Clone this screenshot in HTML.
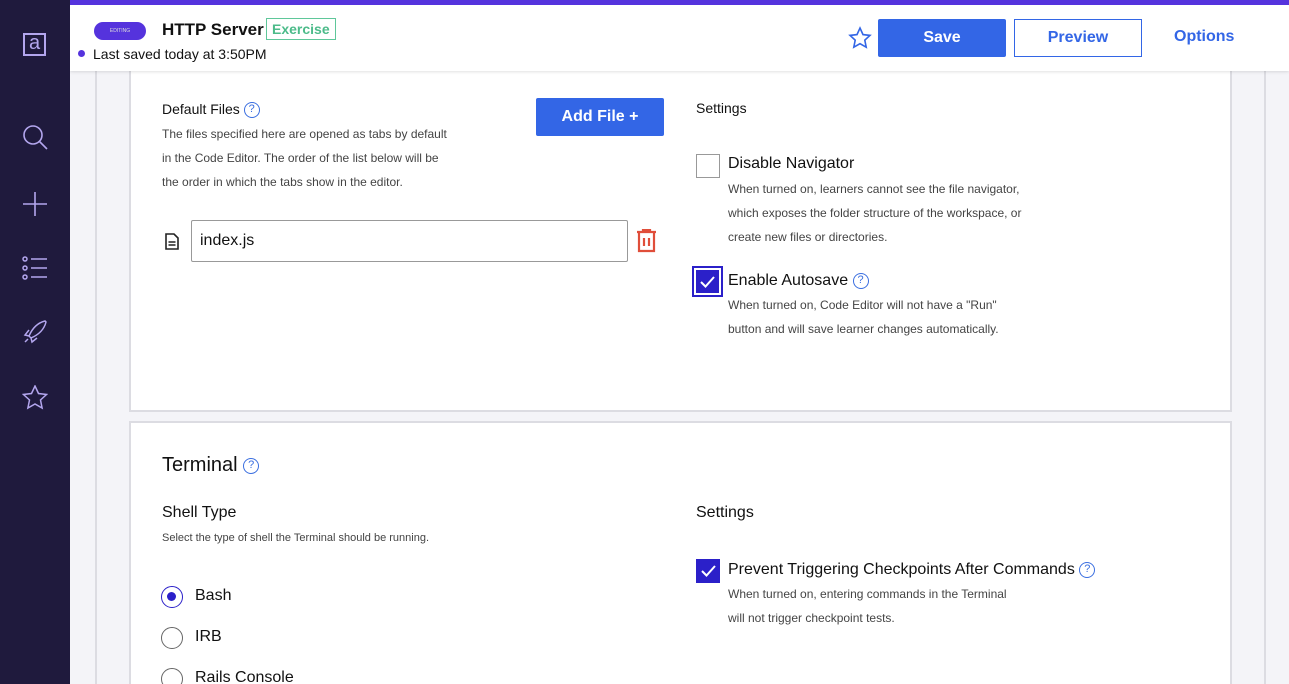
<!DOCTYPE html>
<html style="overflow:hidden;height:684px"><head><style>
*{box-sizing:border-box;margin:0;padding:0}
body{width:1289px;height:684px;overflow:hidden;font-family:"Liberation Sans",sans-serif;background:#f4f4f8;position:relative;color:#111}
.side{position:absolute;left:0;top:0;width:70px;height:684px;background:#1f1a3d;z-index:5}
.top{position:absolute;left:70px;top:0;width:1219px;height:5px;background:#5533dd;z-index:5}
.hdr{position:absolute;left:70px;top:5px;width:1219px;height:66px;background:#fff;box-shadow:0 1px 3px rgba(0,0,0,.12);z-index:4}
.outer{position:absolute;left:95px;top:71px;width:1171px;height:613px;border-left:2px solid #dcdce2;border-right:2px solid #dcdce2}
.card{position:absolute;left:129px;width:1103px;background:#fff;border:2px solid #dcdce2}
.a{position:absolute;white-space:nowrap}
.small{font-size:12px;color:#444;line-height:24px}
.q{display:inline-block;width:16px;height:16px;border:1.5px solid #3b6fe0;border-radius:50%;color:#3b6fe0;font-size:11px;text-align:center;line-height:13px;vertical-align:middle}
.btn{position:absolute;background:#3366e6;color:#fff;font-weight:bold;font-size:16px;text-align:center;border-radius:2px}
.radio{position:absolute;width:22px;height:22px;border:1.5px solid #666;border-radius:50%}
</style></head><body>
<div class="side">
<div class="a" style="left:23px;top:33px;width:23px;height:23px;border:2px solid #b3a6ee;color:#b3a6ee;font-size:20px;text-align:center;line-height:17px">a</div>
<svg class="a" style="left:22px;top:124px" width="26" height="28" fill="none" stroke="#b3a6ee" stroke-width="1.6"><circle cx="11" cy="11" r="9"/><path d="M17.5 17.5L25 25"/></svg>
<svg class="a" style="left:22px;top:191px" width="26" height="26" stroke="#b3a6ee" stroke-width="1.6"><path d="M13 1v24M1 13h24"/></svg>
<svg class="a" style="left:22px;top:256px" width="26" height="24" fill="none" stroke="#b3a6ee" stroke-width="1.5"><circle cx="3" cy="3" r="2"/><circle cx="3" cy="12" r="2"/><circle cx="3" cy="21" r="2"/><path d="M9 3h16M9 12h16M9 21h16"/></svg>
<svg class="a" style="left:23px;top:320px" width="24" height="24" fill="none" stroke="#b3a6ee" stroke-width="1.5"><path d="M22 1C14 3 9 9 6 16l2 2c7-3 13-8 15-16zM6 16l-4-1 4-5M8 18l1 4 5-4M5 19l-3 3"/></svg>
<svg class="a" style="left:22px;top:385px" width="26" height="25" fill="none" stroke="#b3a6ee" stroke-width="1.5"><path d="M13 1l3.5 7.5 8 1-6 5.5 1.6 8L13 19l-7.1 4 1.6-8-6-5.5 8-1z"/></svg>
</div>
<div class="top"></div>
<div class="hdr">
<div class="a" style="left:24px;top:17px;width:52px;height:18px;border-radius:9px;background:#5533dd;color:#ddd;font-size:5px;text-align:center;line-height:18px">EDITING</div>
<div class="a" style="left:92px;top:15px;font-size:17px;font-weight:bold">HTTP Server</div>
<div class="a" style="left:196px;top:13px;border:1.5px solid #5fc79a;color:#4cbb8a;font-size:14px;font-weight:bold;padding:2px 5px">Exercise</div>
<div class="a" style="left:8px;top:45px;width:7px;height:7px;border-radius:50%;background:#5533dd"></div>
<div class="a" style="left:23px;top:41px;font-size:14px">Last saved today at 3:50PM</div>
<svg class="a" style="left:778px;top:21px" width="24" height="24" fill="none" stroke="#3366e6" stroke-width="1.6"><path d="M12 2l3 6.6 7 .8-5.2 4.8 1.4 7L12 17.7 5.8 21.2l1.4-7L2 9.4l7-.8z"/></svg>
<div class="btn" style="left:808px;top:14px;width:128px;height:38px;line-height:38px">Save</div>
<div class="a" style="left:944px;top:14px;width:128px;height:38px;border:1.5px solid #3366e6;color:#3366e6;font-weight:bold;font-size:16px;text-align:center;line-height:35px">Preview</div>
<div class="a" style="left:1104px;top:23px;color:#3366e6;font-weight:bold;font-size:16px">Options</div>
</div>
<div class="outer"></div>
<div class="card" style="top:60px;height:352px;border-top:none"></div>
<div class="card" style="top:421px;height:263px;border-bottom:none"></div>

<div class="a" style="left:162px;top:101px;font-size:14px">Default Files <span class="q">?</span></div>
<div class="a small" style="left:162px;top:122px">The files specified here are opened as tabs by default<br>in the Code Editor. The order of the list below will be<br>the order in which the tabs show in the editor.</div>
<div class="btn" style="left:536px;top:98px;width:128px;height:38px;line-height:38px">Add File +</div>
<svg class="a" style="left:165px;top:233px" width="14" height="17" fill="none" stroke="#222" stroke-width="1.6"><path d="M1 1h8l4 4v11H1z M3.5 9h7M3.5 12h7"/></svg>
<div class="a" style="left:191px;top:220px;width:437px;height:42px;border:1px solid #999;border-radius:2px;font-size:16px;padding:11px 8px">index.js</div>
<svg class="a" style="left:636px;top:229px" width="21" height="24" fill="none" stroke="#e04e3a" stroke-width="2.2"><path d="M1 3h19M7 3V1h7v2M3 4v18h15V4M8 9v8M13 9v8"/></svg>

<div class="a" style="left:696px;top:100px;font-size:14px">Settings</div>
<div class="a" style="left:696px;top:154px;width:24px;height:24px;border:1.5px solid #999"></div>
<div class="a" style="left:728px;top:155px;font-size:16px">Disable Navigator</div>
<div class="a small" style="left:728px;top:177px">When turned on, learners cannot see the file navigator,<br>which exposes the folder structure of the workspace, or<br>create new files or directories.</div>
<div class="a" style="left:692px;top:266px;width:31px;height:31px;border:2px solid #2b20c9;padding:2px"><svg width="23" height="23" style="display:block;background:#2b20c9"><path d="M5 12l4.5 4.5L18 7" fill="none" stroke="#fff" stroke-width="2"/></svg></div>
<div class="a" style="left:728px;top:272px;font-size:16px">Enable Autosave <span class="q">?</span></div>
<div class="a small" style="left:728px;top:293px">When turned on, Code Editor will not have a "Run"<br>button and will save learner changes automatically.</div>

<div class="a" style="left:162px;top:454px;font-size:20px">Terminal <span class="q">?</span></div>
<div class="a" style="left:162px;top:504px;font-size:16px">Shell Type</div>
<div class="a small" style="left:162px;top:526px;font-size:11px">Select the type of shell the Terminal should be running.</div>
<div class="radio" style="left:161px;top:586px;border-color:#2b20c9"><div style="position:absolute;left:5px;top:5px;width:9px;height:9px;border-radius:50%;background:#2b20c9"></div></div>
<div class="a" style="left:195px;top:587px;font-size:16px">Bash</div>
<div class="radio" style="left:161px;top:627px"></div>
<div class="a" style="left:195px;top:628px;font-size:16px">IRB</div>
<div class="radio" style="left:161px;top:668px"></div>
<div class="a" style="left:195px;top:669px;font-size:16px">Rails Console</div>

<div class="a" style="left:696px;top:504px;font-size:16px">Settings</div>
<svg class="a" style="left:696px;top:559px" width="24" height="24"><rect width="24" height="24" fill="#2b20c9"/><path d="M6 12l4.5 4.5L19 7" fill="none" stroke="#fff" stroke-width="2"/></svg>
<div class="a" style="left:728px;top:561px;font-size:16px">Prevent Triggering Checkpoints After Commands <span class="q">?</span></div>
<div class="a small" style="left:728px;top:582px">When turned on, entering commands in the Terminal<br>will not trigger checkpoint tests.</div>
</body></html>
